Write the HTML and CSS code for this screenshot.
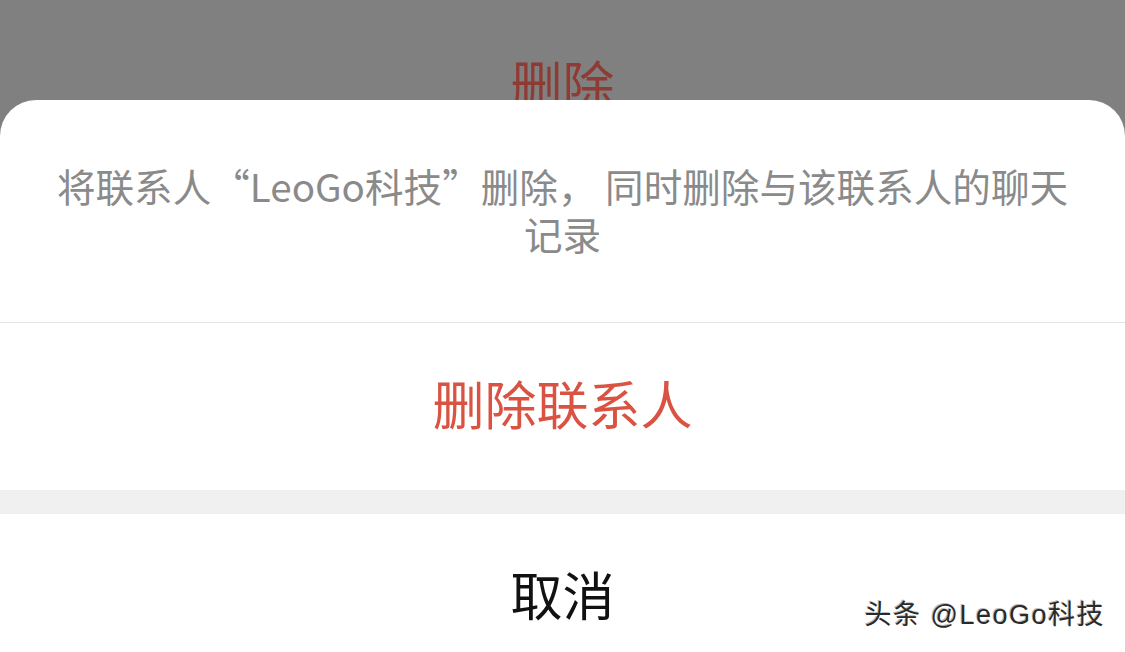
FILE: index.html
```html
<!DOCTYPE html>
<html lang="zh-CN">
<head>
    <meta charset="UTF-8">
    <title>删除联系人</title>
    <link rel="stylesheet" href="styles.css">
</head>
<body>
    <!-- 背后的页面，被遮罩压暗 -->
    <div class="backdrop">
        <div class="backdrop-title">删除</div>
    </div>

    <!-- 底部操作菜单 -->
    <div class="action-sheet">
        <div class="sheet-message">将联系人“LeoGo科技”删除， 同时删除与该联系人的聊天记录</div>
        <div class="sheet-button danger">删除联系人</div>
        <div class="sheet-gap"></div>
        <div class="sheet-button">取消</div>
    </div>

    <div class="watermark">头条 @LeoGo科技</div>
</body>
</html>
```

FILE: styles.css
```css
/* 基本设置 */
body {
    margin: 0;
    height: 652px;
    overflow: hidden;
    background-color: #808080; /* 遮罩灰 */
    font-family: "Noto Sans CJK SC", "Liberation Sans", sans-serif;
    position: relative;
}

.backdrop {
    height: 100px;
    padding-top: 57px;
    box-sizing: border-box;
    text-align: center;
}

.backdrop-title {
    font-size: 52px;
    line-height: 52px;
    color: #8f3b33; /* 压暗的红色 */
}

/* 操作菜单 */
.action-sheet {
    position: relative; /* 盖住背后的文字 */
    background-color: #ffffff;
    border-radius: 36px 36px 0 0;
}

.sheet-message {
    padding: 61px 50px 65px;
    font-size: 38.6px;
    line-height: 48px;
    color: #8a8a8a;
    text-align: center;
    border-bottom: 1px solid #e4e4e4;
}

.sheet-button {
    height: 167px;
    box-sizing: border-box;
    padding-bottom: 8px;
    display: flex;
    align-items: center;
    justify-content: center;
    font-size: 52px;
    color: #111111;
}

.sheet-button.danger {
    color: #da5241;
}

.sheet-gap {
    height: 24px;
    background-color: #f0f0f0;
}

/* 水印 */
.watermark {
    position: absolute;
    right: 20px;
    bottom: 20px;
    font-family: "Liberation Sans", "Noto Sans CJK SC", sans-serif;
    font-size: 27px;
    letter-spacing: 1.5px;
    color: #2a2a2a;
    text-shadow: 1px 1px 0 #ffffff, -1px -1px 0 #bbbbbb;
}
```
